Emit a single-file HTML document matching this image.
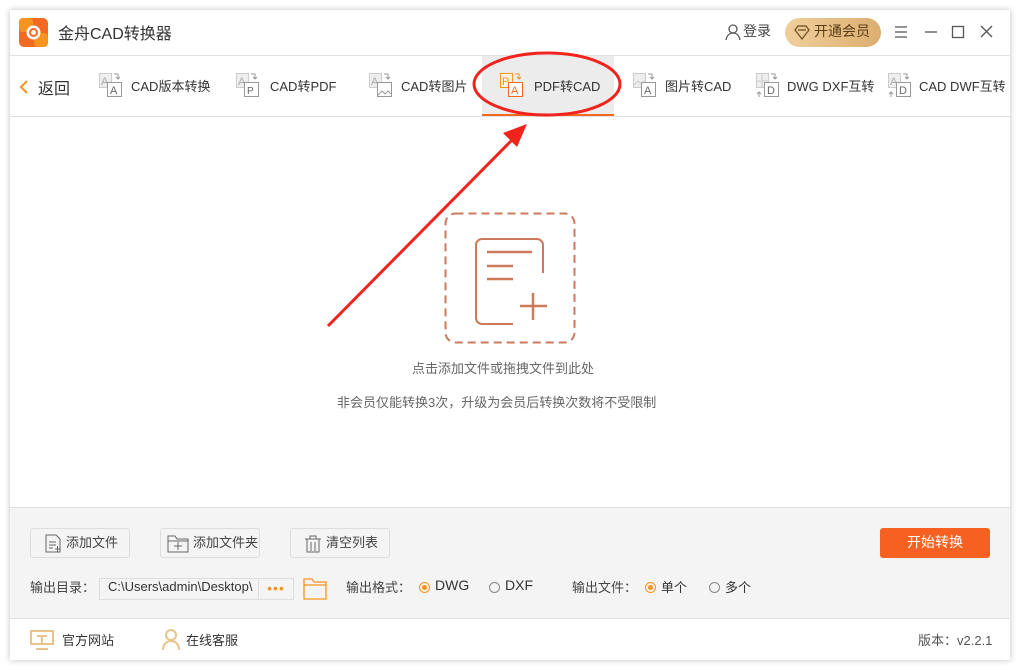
<!DOCTYPE html>
<html><head><meta charset="utf-8"><style>
*{margin:0;padding:0;box-sizing:border-box}
body{width:1020px;height:670px;background:#fff;font-family:"Liberation Sans","Noto Sans CJK SC",sans-serif;position:relative;overflow:hidden;color:#333}
.win{position:absolute;left:10px;top:10px;width:1000px;height:650px;background:#fff;box-shadow:0 0 6px rgba(0,0,0,.25)}
.abs{position:absolute}
.t{position:absolute;white-space:nowrap;margin-top:-3px}
.btn{position:absolute;top:528px;height:30px;border:1px solid #ddd;border-radius:3px;background:#f4f4f4;font-size:13px;color:#444}
.radio{position:absolute;width:11px;height:11px;border:1px solid #888;border-radius:50%;top:582px}
.radio.on{border-color:#f7931e}
.radio.on:after{content:"";position:absolute;left:2px;top:2px;width:5px;height:5px;border-radius:50%;background:#f7931e}
</style></head><body>
<div class="win"></div>
<!-- title bar -->
<svg class="abs" style="left:19px;top:18px" width="29" height="29" viewBox="0 0 29 29"><rect width="29" height="29" rx="5" fill="#f26a21"/><rect x="0" y="0" width="14" height="14" rx="4" fill="#f7931e"/><rect x="15" y="15" width="14" height="14" rx="4" fill="#f7931e"/><circle cx="14.5" cy="14.5" r="7" fill="#fff"/><circle cx="14.5" cy="14.5" r="3.5" fill="none" stroke="#f26a21" stroke-width="2"/></svg>
<div class="t" style="left:58px;top:23px;font-size:16px;color:#333">金舟CAD转换器</div>
<svg class="abs" style="left:725px;top:24px" width="16" height="17"><circle cx="8" cy="5" r="4" fill="none" stroke="#555" stroke-width="1.3"/><path d="M1 16c1-5 4-7 7-7s6 2 7 7" fill="none" stroke="#555" stroke-width="1.3"/></svg>
<div class="t" style="left:743px;top:24px;font-size:14px;color:#444">登录</div>
<div class="abs" style="left:785px;top:18px;width:96px;height:29px;border-radius:15px;background:linear-gradient(90deg,#f0cf9c,#dcae70)"></div>
<svg class="abs" style="left:794px;top:25px" width="16" height="15"><path d="M4 1h8l3 4-7 9-7-9z M4 5h8" fill="none" stroke="#6b4a20" stroke-width="1.2"/></svg>
<div class="t" style="left:814px;top:24px;font-size:14px;color:#5a3d18">开通会员</div>
<svg class="abs" style="left:893px;top:25px" width="100" height="15" stroke="#555" stroke-width="1.3" fill="none"><path d="M2 2h12M2 7h12M2 12h12"/><path d="M32 7h12"/><rect x="59.5" y="1.5" width="11" height="11"/><path d="M88 1l11 11M99 1L88 12"/></svg>
<div class="abs" style="left:10px;top:55px;width:1000px;height:1px;background:#e2e2e2"></div>
<!-- toolbar -->
<div class="abs" style="left:482px;top:56px;width:132px;height:60px;background:#ececec;border-bottom:2px solid #f26a21"></div>
<svg class="abs" style="left:19px;top:80px" width="10" height="14" fill="none" stroke="#f7931e" stroke-width="2"><path d="M8 1L2 7l6 6"/></svg>
<div class="t" style="left:38px;top:78px;font-size:16px;color:#333">返回</div>
<svg class="abs" style="left:99px;top:73px" width="24" height="25" fill="none" stroke="#999" stroke-width="1"><rect x=".5" y=".5" width="12" height="14" fill="#eee" stroke="#ccc"/><text x="2" y="12" font-size="11" fill="#aaa" stroke="none" font-family="Liberation Sans">A</text><rect x="8.5" y="9.5" width="14" height="14" fill="#fff"/><text x="11" y="21" font-size="11" fill="#666" stroke="none" font-family="Liberation Sans">A</text><path d="M15 1h4v5M17 4l2 2 2-2"/></svg>
<div class="t" style="left:131px;top:79px;font-size:13px">CAD版本转换</div>
<svg class="abs" style="left:236px;top:73px" width="24" height="25" fill="none" stroke="#999" stroke-width="1"><rect x=".5" y=".5" width="12" height="14" fill="#eee" stroke="#ccc"/><text x="2" y="12" font-size="11" fill="#aaa" stroke="none" font-family="Liberation Sans">A</text><rect x="8.5" y="9.5" width="14" height="14" fill="#fff"/><text x="11" y="21" font-size="10" fill="#666" stroke="none" font-family="Liberation Sans">P</text><path d="M15 1h4v5M17 4l2 2 2-2"/></svg>
<div class="t" style="left:270px;top:79px;font-size:13px">CAD转PDF</div>
<svg class="abs" style="left:369px;top:73px" width="24" height="25" fill="none" stroke="#999" stroke-width="1"><rect x=".5" y=".5" width="12" height="14" fill="#eee" stroke="#ccc"/><text x="2" y="12" font-size="11" fill="#aaa" stroke="none" font-family="Liberation Sans">A</text><rect x="8.5" y="9.5" width="14" height="14" fill="#fff"/><path d="M9 22l4-4 3 3 3-3 3 3"/><path d="M15 1h4v5M17 4l2 2 2-2"/></svg>
<div class="t" style="left:401px;top:79px;font-size:13px">CAD转图片</div>
<svg class="abs" style="left:500px;top:73px" width="24" height="25" fill="none" stroke="#f7931e" stroke-width="1"><rect x=".5" y=".5" width="12" height="14" fill="#fff3e0"/><text x="2" y="12" font-size="11" fill="#f7931e" stroke="none" font-family="Liberation Sans">P</text><rect x="8.5" y="9.5" width="14" height="14" fill="#fff" stroke="#f26a21"/><text x="11" y="21" font-size="11" fill="#f26a21" stroke="none" font-family="Liberation Sans">A</text><path d="M15 1h4v5M17 4l2 2 2-2"/></svg>
<div class="t" style="left:534px;top:79px;font-size:13px">PDF转CAD</div>
<svg class="abs" style="left:633px;top:73px" width="24" height="25" fill="none" stroke="#999" stroke-width="1"><rect x=".5" y=".5" width="12" height="14" fill="#eee" stroke="#ccc"/><path d="M1 12l4-4 3 3 4-3" stroke="#ccc"/><rect x="8.5" y="9.5" width="14" height="14" fill="#fff"/><text x="11" y="21" font-size="11" fill="#666" stroke="none" font-family="Liberation Sans">A</text><path d="M15 1h4v5M17 4l2 2 2-2"/></svg>
<div class="t" style="left:665px;top:79px;font-size:13px">图片转CAD</div>
<svg class="abs" style="left:756px;top:73px" width="24" height="25" fill="none" stroke="#999" stroke-width="1"><rect x=".5" y=".5" width="12" height="14" fill="#eee" stroke="#ccc"/><path d="M0 8h13M6 0v15" stroke="#ccc"/><rect x="8.5" y="9.5" width="14" height="14" fill="#fff"/><text x="11" y="21" font-size="11" fill="#666" stroke="none" font-family="Liberation Sans">D</text><path d="M15 1h4v5M17 4l2 2 2-2M3 24v-5M1 21l2-2 2 2"/></svg>
<div class="t" style="left:787px;top:79px;font-size:13px">DWG DXF互转</div>
<svg class="abs" style="left:888px;top:73px" width="24" height="25" fill="none" stroke="#999" stroke-width="1"><rect x=".5" y=".5" width="12" height="14" fill="#eee" stroke="#ccc"/><text x="2" y="12" font-size="11" fill="#aaa" stroke="none" font-family="Liberation Sans">A</text><rect x="8.5" y="9.5" width="14" height="14" fill="#fff"/><text x="11" y="21" font-size="11" fill="#666" stroke="none" font-family="Liberation Sans">D</text><path d="M15 1h4v5M17 4l2 2 2-2M3 24v-5M1 21l2-2 2 2"/></svg>
<div class="t" style="left:919px;top:79px;font-size:13px">CAD DWF互转</div>
<div class="abs" style="left:10px;top:116px;width:1000px;height:1px;background:#e2e2e2"></div>
<!-- center -->
<svg class="abs" style="left:444px;top:212px" width="133" height="133"><rect x="1.5" y="1.5" width="129" height="129" rx="10" fill="none" stroke="#cd7a5c" stroke-width="2" stroke-dasharray="8 5"/><path d="M99 61V33a6 6 0 0 0-6-6H38a6 6 0 0 0-6 6v73a6 6 0 0 0 6 6h31" fill="none" stroke="#cd7a5c" stroke-width="2"/><path d="M43 40h45M43 54h26M43 67h26M76 94h27M89 81v27" stroke="#cd7a5c" stroke-width="2.5"/></svg>
<div class="t" style="left:412px;top:361px;font-size:13px;color:#666">点击添加文件或拖拽文件到此处</div>
<div class="t" style="left:337px;top:395px;font-size:13px;color:#666">非会员仅能转换3次，升级为会员后转换次数将不受限制</div>
<!-- bottom panel -->
<div class="abs" style="left:10px;top:507px;width:1000px;height:112px;background:#f4f4f4;border-top:1px solid #e0e0e0;border-bottom:1px solid #e0e0e0"></div>
<div class="btn" style="left:30px;width:100px"><svg class="abs" style="left:14px;top:5px" width="16" height="19" fill="none" stroke="#666"><path d="M1 1h10l4 4v13H1zM4 8h7M4 11h7M4 14h4M10 15h5M12.5 12v6"/></svg><span class="t" style="left:35px;top:6px">添加文件</span></div>
<div class="btn" style="left:160px;width:100px"><svg class="abs" style="left:6px;top:6px" width="22" height="18" fill="none" stroke="#666"><path d="M1 1h7l2 3h11v13H1zM1 6h20M7 11h8M11 7v8"/></svg><span class="t" style="left:32px;top:6px">添加文件夹</span></div>
<div class="btn" style="left:290px;width:100px"><svg class="abs" style="left:13px;top:5px" width="18" height="19" fill="none" stroke="#666"><path d="M1 5h16M6 5V2h6v3M3 5v13h12V5M7 8v9M11 8v9"/></svg><span class="t" style="left:35px;top:6px">清空列表</span></div>
<div class="abs" style="left:880px;top:528px;width:110px;height:30px;background:#f66122;border-radius:3px;color:#fff;font-size:14px;text-align:center;line-height:28px">开始转换</div>
<div class="t" style="left:30px;top:580px;font-size:13px;color:#444">输出目录：</div>
<div class="abs" style="left:99px;top:578px;width:195px;height:22px;border:1px solid #ddd;background:#f4f4f4"></div>
<div class="t" style="left:108px;top:582px;font-size:13px;color:#333;width:150px;overflow:hidden">C:\Users\admin\Desktop\</div>
<div class="abs" style="left:258px;top:579px;width:35px;height:20px;border-left:1px solid #ddd;background:#f4f4f4;color:#f7931e;font-size:14px;text-align:center;line-height:18px;letter-spacing:1px">•••</div>
<svg class="abs" style="left:303px;top:578px" width="24" height="22" fill="none" stroke="#f7931e" stroke-width="1.3"><path d="M1 1h8l2 3h12v17H1zM1 7h22"/></svg>
<div class="t" style="left:346px;top:580px;font-size:13px;color:#444">输出格式：</div>
<div class="radio on" style="left:419px"></div><div class="t" style="left:435px;top:580px;font-size:14px">DWG</div>
<div class="radio" style="left:489px"></div><div class="t" style="left:505px;top:580px;font-size:14px">DXF</div>
<div class="t" style="left:572px;top:580px;font-size:13px;color:#444">输出文件：</div>
<div class="radio on" style="left:645px"></div><div class="t" style="left:661px;top:580px;font-size:13px">单个</div>
<div class="radio" style="left:709px"></div><div class="t" style="left:725px;top:580px;font-size:13px">多个</div>
<!-- footer -->
<svg class="abs" style="left:30px;top:630px" width="24" height="20" fill="none" stroke="#e8c48c" stroke-width="2"><rect x="1" y="1" width="22" height="13"/><path d="M7 6h10M12 6v8M6 19h12"/></svg>
<div class="t" style="left:62px;top:633px;font-size:13px">官方网站</div>
<svg class="abs" style="left:162px;top:629px" width="18" height="21" fill="none" stroke="#e8c48c" stroke-width="2"><circle cx="9" cy="6" r="5"/><path d="M1 21c0-6 4-9 8-9s8 3 8 9"/></svg>
<div class="t" style="left:186px;top:633px;font-size:13px">在线客服</div>
<div class="t" style="left:918px;top:633px;font-size:13px;color:#555">版本：v2.2.1</div>
<!-- annotations -->
<svg class="abs" style="left:0;top:0" width="1020" height="670"><ellipse cx="547" cy="84" rx="73" ry="31" fill="none" stroke="#f0241c" stroke-width="3"/><path d="M328 326L512 140" stroke="#f0241c" stroke-width="3"/><path d="M527 124l-24 9 14 14z" fill="#f0241c"/></svg>
</body></html>
